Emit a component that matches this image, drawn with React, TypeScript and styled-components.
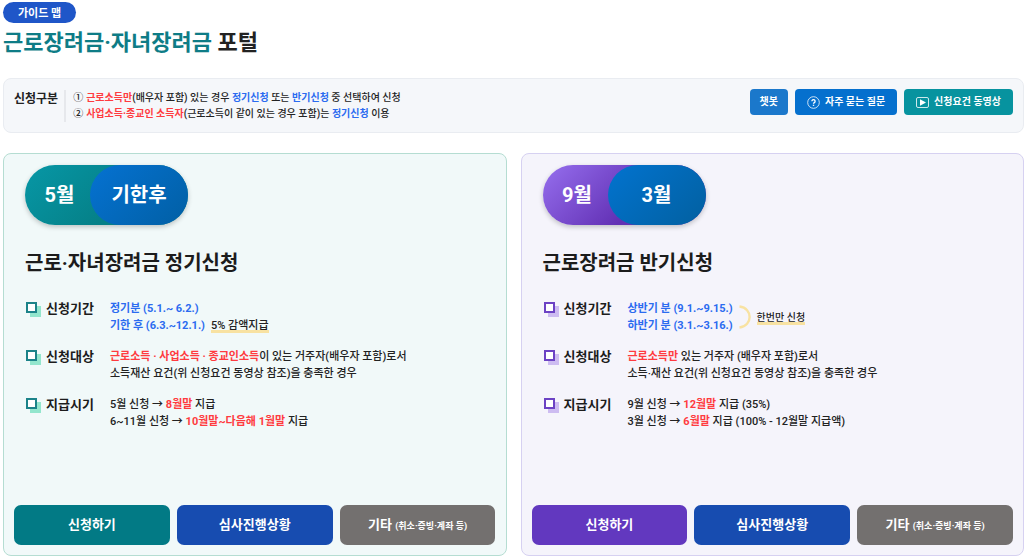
import React from "react";
import styled, { createGlobalStyle } from "styled-components";

const GlobalStyle = createGlobalStyle`
  *, *::before, *::after { box-sizing: border-box; }
  body {
    margin: 0;
    background: #fff;
    color: #222;
    font-family: Roboto, "Noto Sans CJK KR", sans-serif;
    font-size: 11px;
    line-height: 17px;
  }
  h1, h2, dl, dd, dt, p, ol { margin: 0; padding: 0; }
  button { font-family: inherit; border: 0; cursor: pointer; color: #fff; }
`;

const Page = styled.main`
  padding: 2px 0 2px 3px;
`;

const GuideBadge = styled.span`
  display: flex;
  align-items: center;
  width: fit-content;
  height: 21px;
  padding: 1px 15px 0;
  border-radius: 11px;
  background: #1f56c8;
  color: #fff;
  font-weight: 700;
`;

const PageTitle = styled.h1`
  margin-top: 4px;
  font-size: 22px;
  line-height: 32px;
  font-weight: 700;
  color: #222;
`;

const TitleAccent = styled.span`
  color: #0e7c86;
`;

const InfoBar = styled.section`
  display: flex;
  align-items: center;
  margin-top: 19px;
  min-height: 55px;
  padding: 8px 10px;
  border: 1px solid #e9ecf1;
  border-radius: 8px;
  background: #f5f7fa;
`;

const InfoLabel = styled.h2`
  align-self: flex-start;
  margin-top: 4px;
  font-size: 12px;
  line-height: 17px;
  font-weight: 700;
`;

const InfoList = styled.ol`
  margin-left: 6px;
  padding-left: 7px;
  border-left: 2px solid #e6e8ec;
  list-style: none;
  font-size: 10px;
  line-height: 16px;
  font-weight: 500;
`;

const InfoItem = styled.li`
  display: flex;
  gap: 3px;
`;

const InfoActions = styled.div`
  display: flex;
  align-self: flex-start;
  gap: 7px;
  margin: 2px 0 0 auto;
`;

const SmallButton = styled.button<{ $color: string; $pad: number }>`
  display: flex;
  align-items: center;
  gap: 5px;
  height: 26px;
  padding: 0 ${(p) => p.$pad}px;
  border-radius: 4px;
  background: ${(p) => p.$color};
  font-size: 10px;
  line-height: 16px;
  font-weight: 700;
`;

const Red = styled.strong`
  color: #ff3b3f;
  font-weight: 700;
`;

const Blue = styled.strong`
  color: #2b6bf0;
  font-weight: 700;
`;

const Cards = styled.div`
  display: grid;
  grid-template-columns: 1fr 1fr;
  gap: 14px;
  margin-top: 20px;
`;

type Theme = {
  bg: string;
  border: string;
  pill: string;
  pillEnd: string;
  mark: string;
  markShadow: string;
  main: string;
};

const teal: Theme = {
  bg: "#f1f9f9",
  border: "#b5ddd2",
  pill: "linear-gradient(135deg, #0797a6, #058087 60%)",
  pillEnd: "linear-gradient(135deg, #0572d2, #015fa4)",
  mark: "#1c8389",
  markShadow: "#93e6cd",
  main: "#027a85",
};

const purple: Theme = {
  bg: "#f5f4fb",
  border: "#d6d1f1",
  pill: "linear-gradient(135deg, #966fee, #6230b4 60%)",
  pillEnd: "linear-gradient(135deg, #0273cf, #0260a0)",
  mark: "#6c42c4",
  markShadow: "#cdbcf1",
  main: "#6238bf",
};

const Card = styled.article<{ $t: Theme }>`
  display: flex;
  flex-direction: column;
  padding: 11px 10px 10px;
  border: 1px solid ${(p) => p.$t.border};
  border-radius: 8px;
  background: ${(p) => p.$t.bg};
`;

const CardBody = styled.div`
  padding: 0 11px;
`;

const MonthPill = styled.div<{ $t: Theme }>`
  display: flex;
  width: 163px;
  height: 60px;
  border-radius: 30px;
  background: ${(p) => p.$t.pill};
  box-shadow: 0 2px 5px rgba(0, 0, 0, 0.22);
  color: #fff;
  font-size: 20px;
  line-height: 60px;
  font-weight: 700;
  text-align: center;
`;

const MonthStart = styled.span`
  flex: 1;
  padding-left: 4px;
`;

const MonthEnd = styled.span<{ $t: Theme }>`
  width: 98px;
  border-radius: 30px;
  background: ${(p) => p.$t.pillEnd};
`;

const CardTitle = styled.h2`
  margin-top: 23px;
  font-size: 20px;
  line-height: 30px;
  font-weight: 700;
  color: #1c1c1c;
`;

const Details = styled.dl`
  display: grid;
  gap: 13px;
  margin-top: 21px;
`;

const DetailRow = styled.div`
  display: grid;
  grid-template-columns: 85px 1fr;
`;

const DetailLabel = styled.dt`
  display: flex;
  gap: 5px;
  padding-left: 1px;
  font-size: 13px;
  line-height: 20px;
  font-weight: 700;
  color: #1c1c1c;
`;

const Mark = styled.span<{ $t: Theme }>`
  width: 11px;
  height: 11px;
  margin: 3px 4px 0 0;
  border: 2px solid ${(p) => p.$t.mark};
  background: #fff;
  box-shadow: 4px 4px 0 ${(p) => p.$t.markShadow};
`;

const DetailText = styled.dd`
  padding-top: 1px;
  font-weight: 500;
`;

const Inline = styled.div`
  display: flex;
  align-items: center;
  gap: 6px;
`;

const Highlight = styled.span<{ $small?: boolean }>`
  background: linear-gradient(#f8e2a2, #f8e2a2) 0 13px / 100% 3px no-repeat;
  font-size: ${(p) => (p.$small ? 10 : 11)}px;
`;

const Actions = styled.div`
  display: grid;
  grid-template-columns: repeat(3, 1fr);
  gap: 7px;
  margin-top: 75px;
`;

const ActionButton = styled.button<{ $color: string }>`
  height: 40px;
  padding: 0;
  border-radius: 7px;
  background: ${(p) => p.$color};
  font-size: 13px;
  line-height: 20px;
  font-weight: 700;
`;

const Note = styled.small`
  font-size: 9px;
  font-weight: 700;
`;

const QuestionIcon = () => (
  <svg width="13" height="13" viewBox="0 0 13 13" fill="none" stroke="#fff" aria-hidden="true">
    <circle cx="6.5" cy="6.5" r="5.8" strokeWidth="0.8" />
    <path d="M4.9 5.2a1.6 1.6 0 1 1 2.4 1.4c-.6.35-.8.6-.8 1.1" strokeWidth="1.3" />
    <path d="M6.5 8.7v1.2" strokeWidth="1.4" />
  </svg>
);

const PlayIcon = () => (
  <svg width="13" height="11" viewBox="0 0 13 11" aria-hidden="true">
    <rect x="0.5" y="0.5" width="12" height="10" rx="1.5" fill="none" stroke="#fff" strokeWidth="0.8" />
    <path d="M4 2.2v6.6l6-3.3z" fill="#fff" />
  </svg>
);

const JoinArc = () => (
  <svg width="12" height="24" viewBox="0 0 12 24" fill="none" aria-hidden="true">
    <path d="M0.5 1.5C14 3 14 21 0.5 22.5" stroke="#f8e2a2" strokeWidth="2.4" />
  </svg>
);

type CardProps = {
  theme: Theme;
  start: string;
  end: string;
  title: string;
  rows: { label: string; text: React.ReactNode }[];
};

const ApplyCard = ({ theme, start, end, title, rows }: CardProps) => (
  <Card $t={theme}>
    <CardBody>
      <MonthPill $t={theme}>
        <MonthStart>{start}</MonthStart>
        <MonthEnd $t={theme}>{end}</MonthEnd>
      </MonthPill>
      <CardTitle>{title}</CardTitle>
      <Details>
        {rows.map((row) => (
          <DetailRow key={row.label}>
            <DetailLabel>
              <Mark $t={theme} />
              {row.label}
            </DetailLabel>
            <DetailText>{row.text}</DetailText>
          </DetailRow>
        ))}
      </Details>
    </CardBody>
    <Actions>
      <ActionButton type="button" $color={theme.main}>신청하기</ActionButton>
      <ActionButton type="button" $color="#174cb0">심사진행상황</ActionButton>
      <ActionButton type="button" $color="#73706f">
        기타 <Note>(취소·증빙·계좌 등)</Note>
      </ActionButton>
    </Actions>
  </Card>
);

const regularRows = [
  {
    label: "신청기간",
    text: (
      <>
        <p><Blue>정기분 (5.1.~ 6.2.)</Blue></p>
        <Inline>
          <Blue>기한 후 (6.3.~12.1.)</Blue>
          <Highlight>5% 감액지급</Highlight>
        </Inline>
      </>
    ),
  },
  {
    label: "신청대상",
    text: (
      <>
        <p><Red>근로소득 · 사업소득 · 종교인소득</Red>이 있는 거주자(배우자 포함)로서</p>
        <p>소득재산 요건(위 신청요건 동영상 참조)을 충족한 경우</p>
      </>
    ),
  },
  {
    label: "지급시기",
    text: (
      <>
        <p>5월 신청 → <Red>8월말</Red> 지급</p>
        <p>6~11월 신청 → <Red>10월말~다음해 1월말</Red> 지급</p>
      </>
    ),
  },
];

const halfYearRows = [
  {
    label: "신청기간",
    text: (
      <Inline>
        <div>
          <p><Blue>상반기 분 (9.1.~9.15.)</Blue></p>
          <p><Blue>하반기 분 (3.1.~3.16.)</Blue></p>
        </div>
        <JoinArc />
        <Highlight $small>한번만 신청</Highlight>
      </Inline>
    ),
  },
  {
    label: "신청대상",
    text: (
      <>
        <p><Red>근로소득만</Red> 있는 거주자 (배우자 포함)로서</p>
        <p>소득·재산 요건(위 신청요건 동영상 참조)을 충족한 경우</p>
      </>
    ),
  },
  {
    label: "지급시기",
    text: (
      <>
        <p>9월 신청 → <Red>12월말</Red> 지급 (35%)</p>
        <p>3월 신청 → <Red>6월말</Red> 지급 (100% - 12월말 지급액)</p>
      </>
    ),
  },
];

export default function App() {
  return (
    <>
      <GlobalStyle />
      <Page>
        <header>
          <GuideBadge>가이드 맵</GuideBadge>
          <PageTitle>
            <TitleAccent>근로장려금·자녀장려금</TitleAccent> 포털
          </PageTitle>
        </header>
        <InfoBar>
          <InfoLabel>신청구분</InfoLabel>
          <InfoList>
            <InfoItem>
              <span>①</span>
              <span>
                <Red>근로소득만</Red>(배우자 포함) 있는 경우 <Blue>정기신청</Blue> 또는 <Blue>반기신청</Blue> 중 선택하여 신청
              </span>
            </InfoItem>
            <InfoItem>
              <span>②</span>
              <span>
                <Red>사업소득·종교인 소득자</Red>(근로소득이 같이 있는 경우 포함)는 <Blue>정기신청</Blue> 이용
              </span>
            </InfoItem>
          </InfoList>
          <InfoActions>
            <SmallButton type="button" $color="#1b78cb" $pad={10}>챗봇</SmallButton>
            <SmallButton type="button" $color="#0570ce" $pad={12}>
              <QuestionIcon />
              자주 묻는 질문
            </SmallButton>
            <SmallButton type="button" $color="#07939f" $pad={12}>
              <PlayIcon />
              신청요건 동영상
            </SmallButton>
          </InfoActions>
        </InfoBar>
        <Cards>
          <ApplyCard theme={teal} start="5월" end="기한후" title="근로·자녀장려금 정기신청" rows={regularRows} />
          <ApplyCard theme={purple} start="9월" end="3월" title="근로장려금 반기신청" rows={halfYearRows} />
        </Cards>
      </Page>
    </>
  );
}
